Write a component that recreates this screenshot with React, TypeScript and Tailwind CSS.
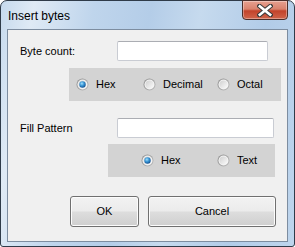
import { useState } from 'react';

function Radio({ checked, label, id }: { checked: boolean; label: string; id: string }) {
  return (
    <div className="flex items-center">
      <svg width="13" height="13" viewBox="0 0 13 13" className="shrink-0">
        <defs>
          <linearGradient id={`ring-${id}`} x1="0" y1="0" x2="1" y2="1">
            <stop offset="0" stopColor="#8c8c8c" />
            <stop offset="1" stopColor="#bdbdbd" />
          </linearGradient>
          <linearGradient id={`fill-${id}`} x1="0" y1="0" x2="1" y2="1">
            <stop offset="0" stopColor="#d0d0d0" />
            <stop offset="1" stopColor="#fbfbfb" />
          </linearGradient>
          <radialGradient id={`dot-${id}`} cx="0.4" cy="0.35" r="0.7">
            <stop offset="0" stopColor="#a6e0fb" />
            <stop offset="0.45" stopColor="#3d9ad8" />
            <stop offset="1" stopColor="#0d4a8c" />
          </radialGradient>
        </defs>
        <circle cx="6.5" cy="6.5" r="6" fill={`url(#ring-${id})`} />
        <circle cx="6.5" cy="6.5" r="5" fill="#f4f4f4" />
        <circle cx="6.5" cy="6.5" r="4" fill={`url(#fill-${id})`} />
        {checked && <circle cx="6.5" cy="6.5" r="3.2" fill={`url(#dot-${id})`} />}
      </svg>
      <span className="ml-[7px] text-[11px] text-black leading-none">{label}</span>
    </div>
  );
}

export default function App() {
  const [radix] = useState('hex');
  const [fill] = useState('hex');

  const btn =
    'h-[31px] rounded-[3px] border border-[#707070] bg-[linear-gradient(to_bottom,#f2f2f2_0%,#ebebeb_48%,#dddddd_52%,#cfcfcf_100%)] shadow-[inset_0_0_0_1px_#fcfcfc] text-[11px] text-black';

  return (
    <div className="w-[295px] h-[247px] bg-white" style={{ fontFamily: "'Liberation Sans', Arial, sans-serif" }}>
      <div className="relative w-full h-full rounded-t-[7px] rounded-b-[3px] border border-[#2f3b49] bg-[linear-gradient(100deg,#c6daee_0%,#dfeaf5_10%,#bfd5ec_28%,#b4cde8_45%,#c6daee_60%,#b2cce8_80%,#bed5ed_100%)] px-[6px] pb-[4px] flex flex-col">
        {/* title bar */}
        <div className="h-[28px] flex items-center pl-[1px] pt-[2px]">
          <span className="text-[12px] text-black">Insert bytes</span>
        </div>

        {/* close button */}
        <div className="absolute top-[-1px] right-[6px] w-[46px] h-[20px] rounded-b-[4px] border border-[#4a2e2a] bg-[linear-gradient(to_bottom,#e6a090_0%,#d9826d_45%,#c2432b_55%,#d0644a_100%)] flex items-center justify-center shadow-[inset_0_0_0_1px_rgba(255,255,255,0.35)]">
          <svg width="16" height="13" viewBox="0 0 16 13">
            <path d="M2.5 2 L13.5 11 M13.5 2 L2.5 11" stroke="#3b3b3b" strokeWidth="4.6" strokeLinecap="square" />
            <path d="M2.8 2.3 L13.2 10.7 M13.2 2.3 L2.8 10.7" stroke="#ffffff" strokeWidth="2.6" strokeLinecap="square" />
          </svg>
        </div>

        {/* client area */}
        <div className="flex-1 border border-[#7d8da0] bg-[#f0f0f0] flex flex-col">
          <div className="mt-[11px] flex items-center">
            <span className="w-[109px] pl-[12px] text-[11px] text-black">Byte count:</span>
            <div className="w-[151px] h-[20px] bg-white border border-[#c9ccd3] border-t-[#abadb3] rounded-[2px]" />
          </div>

          <div className="mt-[7px] ml-[61px] w-[212px] h-[33px] bg-[#d3d3d3] flex items-center pl-[7px]">
            <div className="w-[67px]">
              <Radio id="r1" checked={radix === 'hex'} label="Hex" />
            </div>
            <div className="w-[74px]">
              <Radio id="r2" checked={radix === 'dec'} label="Decimal" />
            </div>
            <Radio id="r3" checked={radix === 'oct'} label="Octal" />
          </div>

          <div className="mt-[17px] flex items-center">
            <span className="w-[109px] pl-[12px] text-[11px] text-black">Fill Pattern</span>
            <div className="w-[157px] h-[20px] bg-white border border-[#c9ccd3] border-t-[#abadb3] rounded-[2px]" />
          </div>

          <div className="mt-[6px] ml-[100px] w-[167px] h-[33px] bg-[#d3d3d3] flex items-center pl-[33px]">
            <div className="w-[76px]">
              <Radio id="f1" checked={fill === 'hex'} label="Hex" />
            </div>
            <Radio id="f2" checked={fill === 'text'} label="Text" />
          </div>

          <div className="mt-[19px] ml-[62px] flex gap-[9px]">
            <button className={`${btn} w-[69px]`}>OK</button>
            <button className={`${btn} w-[128px]`}>Cancel</button>
          </div>
        </div>
      </div>
    </div>
  );
}
